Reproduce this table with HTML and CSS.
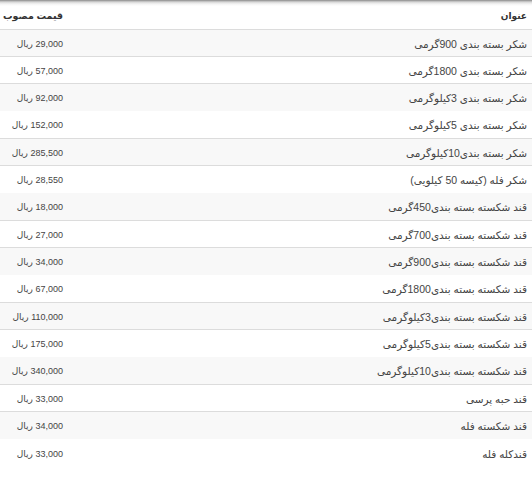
FILE: index.html
```html
<!DOCTYPE html>
<html lang="fa" dir="rtl">
<head>
<meta charset="utf-8">
<title>قیمت شکر و قند</title>
<link rel="stylesheet" href="styles.css">
</head>
<body>
<div class="table">
  <div class="row head">
    <div class="title">عنوان</div>
    <div class="price">قیمت مصوب</div>
  </div>
  <div class="row"><div class="title">شکر بسته بندی 900گرمی</div><div class="price">29,000 ریال</div></div>
  <div class="row"><div class="title">شکر بسته بندی 1800گرمی</div><div class="price">57,000 ریال</div></div>
  <div class="row"><div class="title">شکر بسته بندی 3کیلوگرمی</div><div class="price">92,000 ریال</div></div>
  <div class="row"><div class="title">شکر بسته بندی 5کیلوگرمی</div><div class="price">152,000 ریال</div></div>
  <div class="row"><div class="title">شکر بسته بندی10کیلوگرمی</div><div class="price">285,500 ریال</div></div>
  <div class="row"><div class="title">شکر فله (کیسه 50 کیلویی)</div><div class="price">28,550 ریال</div></div>
  <div class="row"><div class="title">قند شکسته بسته بندی450گرمی</div><div class="price">18,000 ریال</div></div>
  <div class="row"><div class="title">قند شکسته بسته بندی700گرمی</div><div class="price">27,000 ریال</div></div>
  <div class="row"><div class="title">قند شکسته بسته بندی900گرمی</div><div class="price">34,000 ریال</div></div>
  <div class="row"><div class="title">قند شکسته بسته بندی1800گرمی</div><div class="price">67,000 ریال</div></div>
  <div class="row"><div class="title">قند شکسته بسته بندی3کیلوگرمی</div><div class="price">110,000 ریال</div></div>
  <div class="row"><div class="title">قند شکسته بسته بندی5کیلوگرمی</div><div class="price">175,000 ریال</div></div>
  <div class="row"><div class="title">قند شکسته بسته بندی10کیلوگرمی</div><div class="price">340,000 ریال</div></div>
  <div class="row"><div class="title">قند حبه پرسی</div><div class="price">33,000 ریال</div></div>
  <div class="row"><div class="title">قند شکسته فله</div><div class="price">34,000 ریال</div></div>
  <div class="row"><div class="title">قندکله فله</div><div class="price">33,000 ریال</div></div>
</div>
</body>
</html>
```

FILE: styles.css
```css
html, body {
  margin: 0;
  padding: 0;
  background: #fff;
}
body {
  font-family: "Liberation Sans", "DejaVu Sans", sans-serif;
  font-size: 10px;
  color: #444;
}
.table {
  display: flex;
  flex-direction: column;
}
.row {
  display: flex;
  justify-content: space-between;
  align-items: center;
  box-sizing: border-box;
  height: 27px;
  padding-top: 1px;
  border-bottom: 1px solid #dcdcdc;
  background: #fff;
}
.row:nth-child(even) {
  background: #f8f8f8;
}
.row:nth-child(3n+1) {
  border-bottom: none;
}
.row:nth-child(3n+2) {
  height: 28px;
}
.row:nth-child(2) {
  height: 27px;
}
.row:last-child {
  border-bottom: none;
}
.row.head {
  height: 30px;
  padding-top: 2px;
  border-bottom: 1px solid #dcdcdc;
  background: linear-gradient(to bottom, #8a8a8a 0, #d6d6d6 2px, #f4f4f4 4px, #fff 6px);
  font-weight: bold;
  color: #333;
}
.title {
  padding-right: 5px;
  font-size: 10.5px;
}
.price {
  width: 63px;
  text-align: right;
  white-space: nowrap;
  font-size: 9px;
}
.head .title {
  font-size: 9px;
}
.head .price {
  font-size: 9.5px;
}
```
